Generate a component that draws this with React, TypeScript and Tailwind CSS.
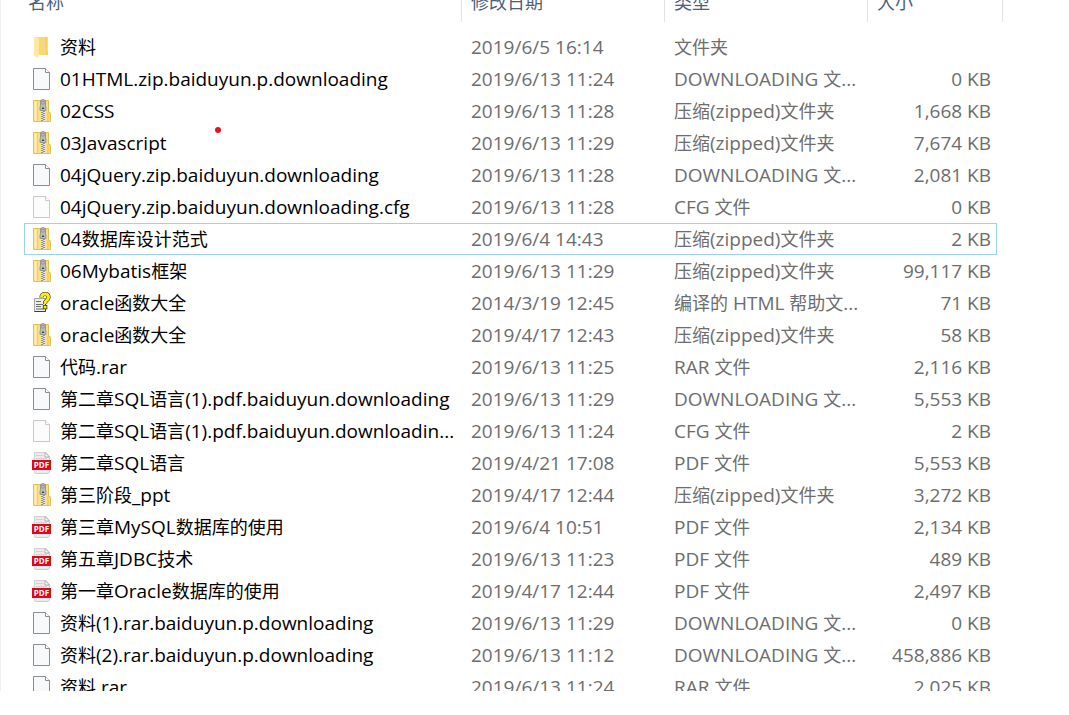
import React from 'react';

type IconKind = 'folder' | 'file' | 'cfg' | 'zip' | 'chm' | 'pdf';

interface FileEntry {
    icon: IconKind;
    name: string;
    date: string;
    type: string;
    size: string;
    focused?: boolean;
}

const files: FileEntry[] = [
    { icon: 'folder', name: '资料', date: '2019/6/5 16:14', type: '文件夹', size: '' },
    { icon: 'file', name: '01HTML.zip.baiduyun.p.downloading', date: '2019/6/13 11:24', type: 'DOWNLOADING 文...', size: '0 KB' },
    { icon: 'zip', name: '02CSS', date: '2019/6/13 11:28', type: '压缩(zipped)文件夹', size: '1,668 KB' },
    { icon: 'zip', name: '03Javascript', date: '2019/6/13 11:29', type: '压缩(zipped)文件夹', size: '7,674 KB' },
    { icon: 'file', name: '04jQuery.zip.baiduyun.downloading', date: '2019/6/13 11:28', type: 'DOWNLOADING 文...', size: '2,081 KB' },
    { icon: 'cfg', name: '04jQuery.zip.baiduyun.downloading.cfg', date: '2019/6/13 11:28', type: 'CFG 文件', size: '0 KB' },
    { icon: 'zip', name: '04数据库设计范式', date: '2019/6/4 14:43', type: '压缩(zipped)文件夹', size: '2 KB', focused: true },
    { icon: 'zip', name: '06Mybatis框架', date: '2019/6/13 11:29', type: '压缩(zipped)文件夹', size: '99,117 KB' },
    { icon: 'chm', name: 'oracle函数大全', date: '2014/3/19 12:45', type: '编译的 HTML 帮助文...', size: '71 KB' },
    { icon: 'zip', name: 'oracle函数大全', date: '2019/4/17 12:43', type: '压缩(zipped)文件夹', size: '58 KB' },
    { icon: 'file', name: '代码.rar', date: '2019/6/13 11:25', type: 'RAR 文件', size: '2,116 KB' },
    { icon: 'file', name: '第二章SQL语言(1).pdf.baiduyun.downloading', date: '2019/6/13 11:29', type: 'DOWNLOADING 文...', size: '5,553 KB' },
    { icon: 'cfg', name: '第二章SQL语言(1).pdf.baiduyun.downloadin...', date: '2019/6/13 11:24', type: 'CFG 文件', size: '2 KB' },
    { icon: 'pdf', name: '第二章SQL语言', date: '2019/4/21 17:08', type: 'PDF 文件', size: '5,553 KB' },
    { icon: 'zip', name: '第三阶段_ppt', date: '2019/4/17 12:44', type: '压缩(zipped)文件夹', size: '3,272 KB' },
    { icon: 'pdf', name: '第三章MySQL数据库的使用', date: '2019/6/4 10:51', type: 'PDF 文件', size: '2,134 KB' },
    { icon: 'pdf', name: '第五章JDBC技术', date: '2019/6/13 11:23', type: 'PDF 文件', size: '489 KB' },
    { icon: 'pdf', name: '第一章Oracle数据库的使用', date: '2019/4/17 12:44', type: 'PDF 文件', size: '2,497 KB' },
    { icon: 'file', name: '资料(1).rar.baiduyun.p.downloading', date: '2019/6/13 11:29', type: 'DOWNLOADING 文...', size: '0 KB' },
    { icon: 'file', name: '资料(2).rar.baiduyun.p.downloading', date: '2019/6/13 11:12', type: 'DOWNLOADING 文...', size: '458,886 KB' },
    { icon: 'file', name: '资料.rar', date: '2019/6/13 11:24', type: 'RAR 文件', size: '2,025 KB' },
];

const FolderIcon = () => (
    <svg viewBox="0 0 24 24" className="size-6 shrink-0" aria-hidden="true">
        <path d="M7 2h10.500v14.500h.5V20H7z" fill="#f8d775" />
        <path d="M15 2h2.500v14.500h.5V20h-2z" fill="#f5ce62" />
        <path d="M4 2h3.500l1.500 2.500V20l-1 3-4-2.500z" fill="#ffe9a2" />
    </svg>
);

const PageIcon = ({ faint }: { faint?: boolean }) => {
    const line = faint ? '#c9c9c9' : '#8c8c8c';
    return (
        <svg viewBox="0 0 24 24" className="size-6 shrink-0" aria-hidden="true">
            <path d="M3.500 1.500h12l4 4v17h-16z" fill={faint ? '#fcfcfc' : '#f8f9fa'} stroke={line} />
            <path d="M15.500 1.500v4h4" fill="#ffffff" stroke={line} />
        </svg>
    );
};

const ZipIcon = () => (
    <svg viewBox="0 0 24 24" className="size-6 shrink-0" aria-hidden="true">
        <path d="M3.500 1.500h15V13l2 1v8.500h-17z" fill="#fbe08a" stroke="#e6c04a" />
        <path d="M4.500 2.500h2v19h-2z" fill="#fff0b8" />
        <path d="M7.500 2v20" stroke="#efcf6a" />
        <path d="M18 13v9" stroke="#e6c04a" />
        <path d="M11 11h4v11h-4z" fill="#f2ecd8" />
        <path d="M12 11v11M14 12v10" stroke="#55585c" strokeWidth="1.200" strokeDasharray="1 1" />
        <path d="M13 11.500v10.500" stroke="#8b8e92" strokeWidth="1" strokeDasharray="1 1" strokeDashoffset="1" />
        <path d="M10.500 1.500q2.500-2 5 0V7l.5 1v3.500h-6V8l.5-1z" fill="#b9bdc1" stroke="#85898d" strokeWidth=".8" />
        <path d="M12 2.500h2v2.500h-2z" fill="#e9ebed" stroke="#5f6367" strokeWidth=".6" />
        <path d="M12 8.500h2v1.500h-2z" fill="#3e4144" />
    </svg>
);

const HelpIcon = () => (
    <svg viewBox="0 0 24 24" className="size-6 shrink-0" aria-hidden="true">
        <path d="M4.500 7.500h11v13h-11z" fill="#eeeeee" stroke="#a6a6a6" />
        <path d="M4.500 20.500h11V9" fill="none" stroke="#3c3c3c" />
        <path d="M6 10.500h5M6 13.500h7M6 15.500h5M6 18h7" stroke="#6b6b6b" />
        <path d="M11.500 6.500q0-3.500 3.500-3.500t3.500 3.200q0 2-2 3.300-1.500 1-1.500 3.500" fill="none" stroke="#2f2f12" strokeWidth="4.200" />
        <path d="M11.500 6.500q0-3.500 3.500-3.500t3.500 3.200q0 2-2 3.300-1.500 1-1.500 3.500" fill="none" stroke="#ffee00" strokeWidth="3" />
        <rect x="13.300" y="14.300" width="3.600" height="3.600" fill="#ffee00" stroke="#2f2f12" strokeWidth=".8" />
    </svg>
);

const PdfIcon = () => (
    <svg viewBox="0 0 24 24" className="size-6 shrink-0" aria-hidden="true">
        <path d="M4.500 1.500h11l4 4V21l-1 1.500H5L4 21.500z" fill="#ececec" stroke="#cfcfcf" />
        <path d="M15 1.500V6h4.500z" fill="#ffffff" stroke="#a9adb0" />
        <path d="M6 4.500h7M6 7.500h11" stroke="#d2d2d2" />
        <rect x="2" y="9" width="19" height="10" fill="#e2061b" />
        <text x="11.500" y="17" textAnchor="middle" fontSize="8" fontWeight="700" fontFamily="Open Sans, sans-serif" fill="#ffffff">
            PDF
        </text>
    </svg>
);

const FileIcon: React.FC<{ kind: IconKind }> = ({ kind }) => {
    switch (kind) {
        case 'folder':
            return <FolderIcon />;
        case 'zip':
            return <ZipIcon />;
        case 'chm':
            return <HelpIcon />;
        case 'pdf':
            return <PdfIcon />;
        default:
            return <PageIcon faint={kind === 'cfg'} />;
    }
};

// Chinese runs are set one size smaller than the Latin around them
const MixedText: React.FC<{ text: string }> = ({ text }) => (
    <>
        {text.split(/([\u4e00-\u9fff]+)/).filter(Boolean).map((run, i) => (
            /[\u4e00-\u9fff]/.test(run) ? <span key={i} className="text-[18px]">{run}</span> : run
        ))}
    </>
);

const columns = [
    { label: '名称', className: 'w-full pl-1' },
    { label: '修改日期', className: 'w-full pl-[9px]' },
    { label: '类型', className: 'w-full pl-[9px]' },
    { label: '大小', className: 'w-[135px] pl-[9px]' },
];

const App: React.FC = () => {
    return (
        <main className="h-screen bg-white pb-6 font-['Open_Sans','Noto_Sans_CJK_SC',sans-serif] text-[19px] leading-6">
            <div className="relative h-full overflow-hidden border-l border-[#f0f0f0] pl-[23px] pr-[72px]">
                <table className="-mt-[18px] w-full table-fixed border-separate border-spacing-0">
                    <colgroup>
                        <col />
                        <col className="w-[203px]" />
                        <col className="w-[203px]" />
                        <col className="w-[129px]" />
                    </colgroup>
                    <thead>
                        <tr>
                            {columns.map((column) => (
                                <th key={column.label} scope="col" className="p-0 pb-[9px] text-left font-normal">
                                    <button
                                        type="button"
                                        className={`flex h-10 items-center border-r border-[#e2e2e2] text-[18px] text-[#4c607a] ${column.className}`}
                                    >
                                        {column.label}
                                    </button>
                                </th>
                            ))}
                        </tr>
                    </thead>
                    <tbody>
                        {files.map((file) => (
                            <tr
                                key={file.name + file.icon}
                                className={file.focused ? 'outline outline-1 -outline-offset-1 outline-[#99d1ff]' : ''}
                            >
                                <td className="h-8 p-0 pl-[6px] text-black">
                                    <div className="flex items-center gap-[6px] whitespace-nowrap">
                                        <FileIcon kind={file.icon} />
                                        <span><MixedText text={file.name} /></span>
                                    </div>
                                </td>
                                <td className="h-8 whitespace-nowrap p-0 pl-[9px] text-[#6d6d6d]">{file.date}</td>
                                <td className="h-8 whitespace-nowrap p-0 pl-[9px] text-[#6d6d6d]"><MixedText text={file.type} /></td>
                                <td className="h-8 whitespace-nowrap p-0 pr-[6px] text-right text-[#6d6d6d]">{file.size}</td>
                            </tr>
                        ))}
                    </tbody>
                </table>
                <span className="absolute left-[214px] top-[127px] size-[6px] rounded-full bg-[#e81123]" />
            </div>
        </main>
    );
};

export default App;
